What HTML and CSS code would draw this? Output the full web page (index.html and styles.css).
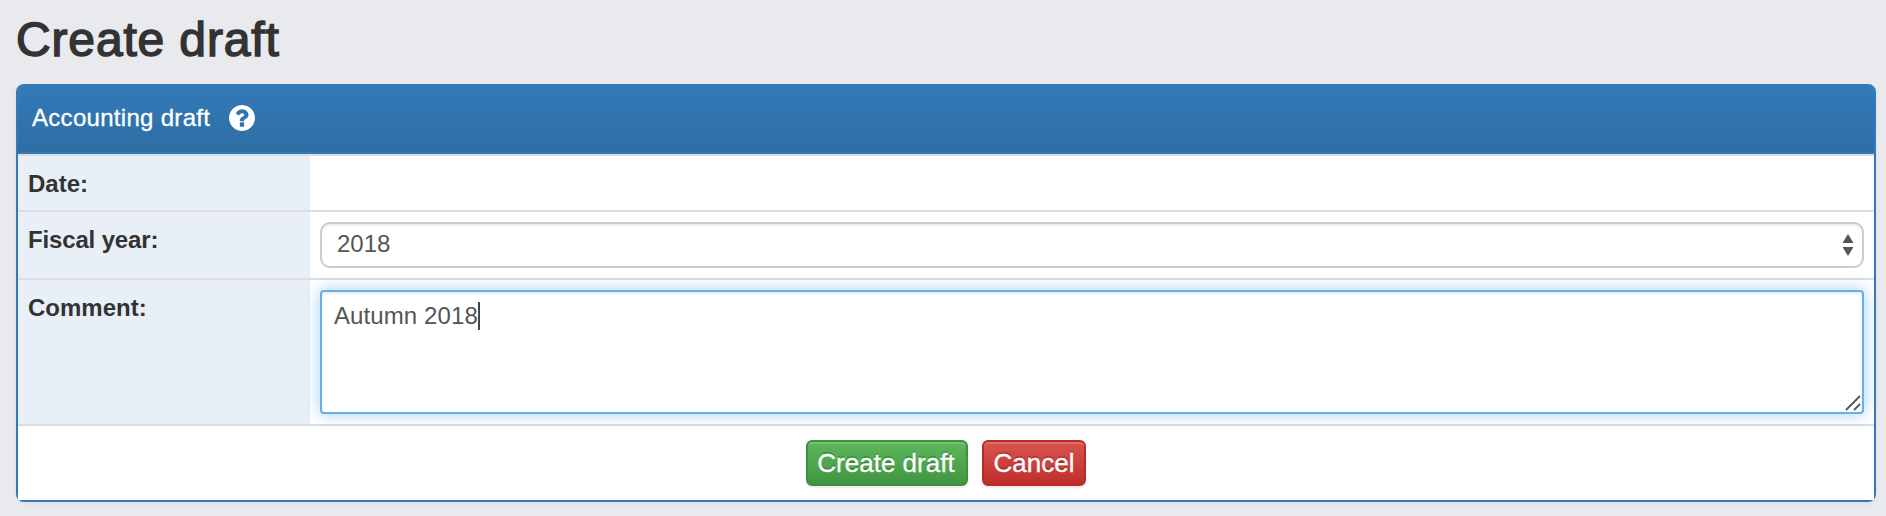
FILE: index.html
```html
<!DOCTYPE html>
<html lang="en">

<head>
  <meta charset="utf-8">
  <meta name="viewport" content="width=device-width, initial-scale=1">
  <title>Create draft</title>
  <link rel="stylesheet" href="styles.css">
</head>

<body>
  <h1>Create draft</h1>

  <form class="panel" method="post">
    <div class="panel-heading">
      <span class="panel-title">Accounting draft</span>
      <svg class="help-icon" viewBox="128 128 1536 1536" width="26" height="26">
        <path fill="#fff" d="M1024 1376v-192q0-14-9-23t-23-9H800q-14 0-23 9t-9 23v192q0 14 9 23t23 9h192q14 0 23-9t9-23zm256-672q0-88-55.500-163T1086 425t-170-41q-243 0-371 213-15 24 8 42l132 100q7 6 19 6 16 0 25-12 53-68 86-92 34-24 86-24 48 0 85.500 26t37.500 59q0 38-20 61t-68 45q-63 28-115.500 86.500T768 1020v36q0 14 9 23t23 9h192q14 0 23-9t9-23q0-19 21.500-49.500T1100 957q32-18 49-28.500t46-35 44.500-48 28-60.500 12.500-81zm384 192q0 209-103 385.500T1281.500 1561 896 1664t-385.500-103T231 1281.500 128 896t103-385.500T510.500 231 896 128t385.500 103T1561 510.500 1664 896z"/>
      </svg>
    </div>

    <div class="row row-date">
      <label class="row-label">Date:</label>
      <div class="row-value"></div>
    </div>

    <div class="row row-year">
      <label class="row-label">Fiscal year:</label>
      <div class="row-value">
        <div class="form-control select">
          <span class="select-text">2018</span>
          <svg class="select-arrows" viewBox="0 0 12 22" width="12" height="22">
            <path d="M6 0l5.500 9H.5zM6 22l5.500-9H.5z" fill="#555"/>
          </svg>
        </div>
      </div>
    </div>

    <div class="row row-comment">
      <label class="row-label">Comment:</label>
      <div class="row-value">
        <div class="form-control textarea">
          <span class="textarea-text">Autumn 2018</span><span class="caret"></span>
          <svg class="resizer" viewBox="0 0 16 16" width="16" height="16">
            <path d="M1 15L15 1M9 15l6-6" stroke="#555" stroke-width="1.800" fill="none"/>
          </svg>
        </div>
      </div>
    </div>

    <div class="panel-footer">
      <button type="button" class="btn btn-success">Create draft</button>
      <button type="button" class="btn btn-danger">Cancel</button>
    </div>
  </form>
</body>

</html>
```

FILE: styles.css
```css
* {
  box-sizing: border-box;
}

body {
  margin: 0;
  padding: 11px 10px 14px 16px;
  background-color: #e9eaee;
  color: #333;
  font-family: "Liberation Sans", Arial, sans-serif;
  font-size: 24px;
  line-height: 34px;
}

h1 {
  margin: 0 0 15px;
  font-size: 48px;
  font-weight: normal;
  line-height: 58px;
  letter-spacing: 0.85px;
  -webkit-text-stroke: 1.5px #333;
}

.panel {
  height: 418px;
  border: 2px solid #337ab7;
  border-radius: 8px;
  background-color: #fff;
  box-shadow: 0 2px 4px rgba(0, 0, 0, 0.05);
}

.panel-heading {
  display: flex;
  align-items: center;
  height: 68px;
  padding: 0 14px 2px;
  border-bottom: 2px solid #337ab7;
  border-radius: 5px 5px 0 0;
  background: linear-gradient(#337ab7, #2e6da4);
  color: #fff;
}

.panel-title {
  letter-spacing: 0.3px;
  -webkit-text-stroke: 0.3px #fff;
}

.help-icon {
  margin-left: 19px;
}

.row {
  display: flex;
  border-top: 2px solid #ddd;
}

.row-date {
  height: 56px;
}

.row-year {
  height: 68px;
}

.row-comment {
  height: 146px;
}

.row-label {
  width: 292px;
  padding: 11px 10px 9px;
  background-color: #e8eff6;
  font-weight: bold;
}

.row-year .row-label {
  letter-spacing: -0.15px;
}

.row-value {
  flex: 1;
  padding: 10px;
}

.form-control {
  position: relative;
  display: flex;
  border: 2px solid #ccc;
  background-color: #fff;
  color: #555;
  box-shadow: inset 0 2px 2px rgba(0, 0, 0, 0.075);
}

.select {
  align-items: center;
  justify-content: space-between;
  height: 46px;
  padding: 0 8px 0 15px;
  border-radius: 10px;
}

.select-text {
  padding-bottom: 2px;
}

/* focused state */
.textarea {
  height: 124px;
  padding: 7px 12px;
  border-color: #66afe9;
  border-radius: 4px;
  box-shadow: inset 0 2px 2px rgba(0, 0, 0, 0.075), 0 0 16px rgba(102, 175, 233, 0.6);
}

.textarea-text {
  letter-spacing: 0.1px;
}

.caret {
  width: 2px;
  height: 28px;
  margin-top: 3px;
  background-color: #444;
}

.resizer {
  position: absolute;
  right: 1px;
  bottom: 1px;
}

.panel-footer {
  display: flex;
  justify-content: center;
  gap: 14px;
  height: 76px;
  padding-top: 14px;
  border-top: 2px solid #ddd;
  background-color: #fff;
}

.btn {
  height: 46px;
  padding: 0 2px 0 0;
  border: 2px solid;
  border-radius: 6px;
  color: #fff;
  font-family: inherit;
  font-size: 26px;
  line-height: 42px;
  text-shadow: 0 -2px 0 rgba(0, 0, 0, 0.2);
  box-shadow: inset 0 2px 0 rgba(255, 255, 255, 0.15), 0 2px 2px rgba(0, 0, 0, 0.075);
  -webkit-text-stroke: 0.3px #fff;
}

.btn-success {
  width: 162px;
  border-color: #3e8f3e;
  background: linear-gradient(#5cb85c, #419641);
}

.btn-danger {
  width: 104px;
  padding-right: 0;
  border-color: #b92c28;
  background: linear-gradient(#d9534f, #c12e2a);
}
```
